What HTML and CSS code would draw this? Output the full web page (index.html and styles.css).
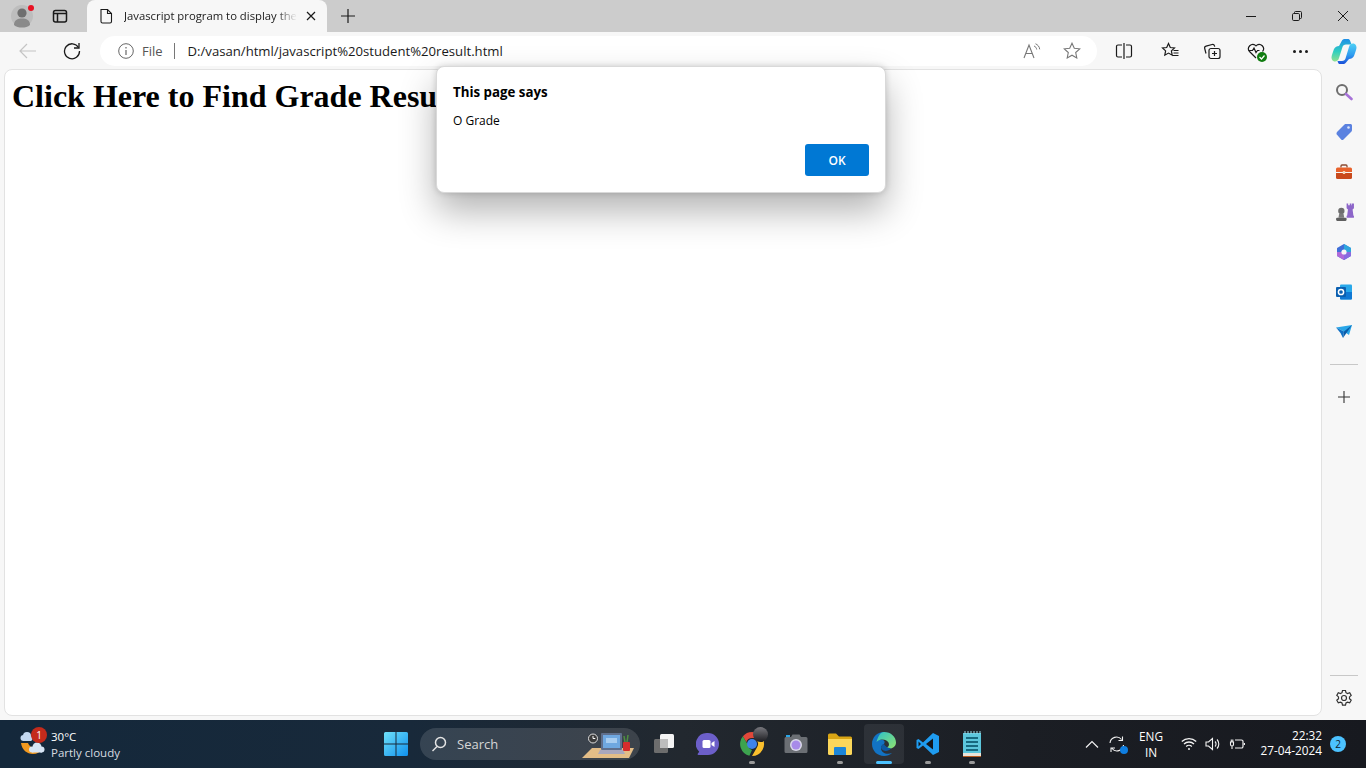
FILE: index.html
```html
<!DOCTYPE html>
<html lang="en">
<head>
    <meta charset="UTF-8">
    <meta name="viewport" content="width=device-width, initial-scale=1.0">
    <title>Javascript program to display the result</title>
    <link rel="stylesheet" href="styles.css">
</head>
<body>

<div class="tabstrip">
    <div class="profile">
        <svg width="24" height="24" viewBox="0 0 24 24"><circle cx="12" cy="12" r="11" fill="#bdbdbd"/><circle cx="12" cy="9" r="4.6" fill="#6f6f6f"/><path d="M4 21c0-5 3.500-6.500 8-6.500s8 1.500 8 6.500c-2 2-5 2.500-8 2.500s-6-.5-8-2.500z" fill="#8a8a8a"/></svg>
        <span class="profile-dot"></span>
    </div>
    <div class="strip-btn">
        <svg width="16" height="16" viewBox="0 0 16 16" fill="none" stroke="#1a1a1a" stroke-width="1.500"><rect x="1.500" y="2.500" width="13" height="11.500" rx="2"/><path d="M1.500 5.500h13M5.500 5.500V14"/></svg>
    </div>
    <div class="tab">
        <svg width="16" height="16" viewBox="0 0 16 16" fill="none" stroke="#1a1a1a" stroke-width="1.100"><path d="M3 1.500h6.500l4 4v8a1.500 1.500 0 0 1-1.500 1.500H4.500A1.500 1.500 0 0 1 3 13.500z"/><path d="M9.500 1.500v4h4"/></svg>
        <span class="tab-title">Javascript program to display the</span>
        <svg class="tab-close" width="10" height="10" viewBox="0 0 10 10" stroke="#1a1a1a" stroke-width="1.200"><path d="M1 1l8 8M9 1l-8 8"/></svg>
    </div>
    <div class="new-tab">
        <svg width="16" height="16" viewBox="0 0 16 16" stroke="#1a1a1a" stroke-width="1.200"><path d="M8 1v14M1 8h14"/></svg>
    </div>
    <div class="win-controls">
        <div class="win-btn"><svg width="10" height="10" viewBox="0 0 10 10" stroke="#1a1a1a"><path d="M0 5.500h10"/></svg></div>
        <div class="win-btn"><svg width="10" height="10" viewBox="0 0 10 10" fill="none" stroke="#1a1a1a"><rect x=".5" y="2.500" width="7" height="7" rx="1.200"/><path d="M2.500 2.500V1.500a1 1 0 0 1 1-1h5a1 1 0 0 1 1 1v5a1 1 0 0 1-1 1h-1"/></svg></div>
        <div class="win-btn"><svg width="10" height="10" viewBox="0 0 10 10" stroke="#1a1a1a"><path d="M0 0l10 10M10 0L0 10"/></svg></div>
    </div>
</div>

<div class="toolbar">
    <div class="nav-btn">
        <svg width="18" height="18" viewBox="0 0 18 18" fill="none" stroke="#c4c4c4" stroke-width="1.200"><path d="M17 9H1M8 2L1 9l7 7"/></svg>
    </div>
    <div class="nav-btn">
        <svg width="18" height="18" viewBox="0 0 18 18" fill="none" stroke="#1a1a1a" stroke-width="1.300"><path d="M15.500 5.500A7.500 7.500 0 1 0 16.500 9"/><path d="M16 1v5h-5"/></svg>
    </div>
    <div class="address">
        <svg width="16" height="16" viewBox="0 0 16 16" fill="none" stroke="#666"><circle cx="8" cy="8" r="7.300"/><path d="M8 7v5M8 4v1.500" stroke-width="1.200"/></svg>
        <span class="addr-file">File</span>
        <span class="addr-sep"></span>
        <span class="addr-url">D:/vasan/html/javascript%20student%20result.html</span>
        <span class="addr-icons">
            <svg width="18" height="16" viewBox="0 0 18 16" fill="none" stroke="#777" stroke-width="1.100"><path d="M1 15L6 2l5 13M2.800 10.500h6.400"/><path d="M11 3c1.500.5 2.500 1.800 2.700 3.500M12.500 .8c2 .8 4 2.700 4.200 5.500" stroke-width="1"/></svg>
            <svg width="18" height="18" viewBox="0 0 18 18" fill="none" stroke="#777" stroke-width="1.100"><path d="M9 1.200l2.300 5 5.400.6-4 3.700 1.100 5.400L9 13.200l-4.800 2.700 1.100-5.400-4-3.700 5.400-.6z"/></svg>
        </span>
    </div>
    <div class="tool-icons">
        <div class="tool-btn"><svg width="18" height="18" viewBox="0 0 18 18" fill="none" stroke="#1a1a1a" stroke-width="1.200"><path d="M7 3H3a1.500 1.500 0 0 0-1.500 1.500v9A1.500 1.500 0 0 0 3 15h4M11 3h4a1.500 1.500 0 0 1 1.500 1.500v9A1.500 1.500 0 0 1 15 15h-4M9 1v16"/></svg></div>
        <div class="tool-btn"><svg class="nudge" width="18" height="18" viewBox="0 0 18 18" fill="none" stroke="#1a1a1a" stroke-width="1.200"><path d="M7.500 1.500l1.800 4 4.200.5-3.100 2.900.8 4.300-3.700-2.100-3.700 2.100.8-4.300L1.500 6l4.200-.5zM12.500 8.500h5M12.500 11h5M11.500 13.500h6"/></svg></div>
        <div class="tool-btn"><svg width="18" height="18" viewBox="0 0 18 18" fill="none" stroke="#1a1a1a" stroke-width="1.200"><path d="M3 11.500l-1.300-5a2 2 0 0 1 1.400-2.400l6-1.600a2 2 0 0 1 2.400 1.400l.2.800"/><rect x="6" y="6.500" width="11" height="10" rx="2"/><path d="M11.500 9v5M9 11.500h5"/></svg></div>
        <div class="tool-btn health">
            <svg width="18" height="18" viewBox="0 0 18 18" fill="none" stroke="#1a1a1a" stroke-width="1.200"><path d="M9 16L2.500 9.500a4.300 4.300 0 0 1 6-6.100l.5.500.5-.5a4.300 4.300 0 0 1 6 6.100"/><path d="M1.500 8.500h4l1.500-2.500 2 4.500 1.500-2h2"/></svg>
            <span class="health-dot"><svg width="8" height="8" viewBox="0 0 8 8" fill="none" stroke="#fff" stroke-width="1.200"><path d="M1.500 4l2 2 3-3.500"/></svg></span>
        </div>
        <div class="tool-btn more"><span></span><span></span><span></span></div>
        <div class="tool-btn">
            <svg width="26" height="26" viewBox="0 0 26 26">
                <defs>
                    <linearGradient id="cpA" x1="0" y1="0" x2="0" y2="1"><stop offset="0" stop-color="#1f8fe8"/><stop offset=".55" stop-color="#2fcfc0"/><stop offset="1" stop-color="#8fe08f"/></linearGradient>
                    <linearGradient id="cpB" x1="0" y1="0" x2="0" y2="1"><stop offset="0" stop-color="#4fd0f5"/><stop offset=".55" stop-color="#2f9df0"/><stop offset="1" stop-color="#1a4fd8"/></linearGradient>
                </defs>
                <path d="M11 2.500C11.800 1.200 13 1 14 1h3c1 0 1.500.5 2 1.500l1.500 4H15c-2 0-3 1-3.500 2.500L8 20c-.5 2-2 3.500-4 3.500-2.500 0-3.500-2.500-3.500-4 0-1 .3-2 .7-3.200L3 11c1-2 3-3 5-3z" fill="url(#cpA)"/>
                <path d="M15 24.500c-.8 1.300-2 1.500-3 1.500H9c-1 0-1.500-.5-2-1.500L6.500 23H11c2 0 3-1 3.500-2.500L18 9c.5-2 2-3.500 4-3.500 2.500 0 3.500 2.500 3.500 4 0 1-.3 2-.7 3.200L23 18c-1 2-3 3-5 3z" fill="url(#cpB)"/>
            </svg>
        </div>
    </div>
</div>

<div class="middle">
    <main class="page">
        <h1>Click Here to Find Grade Result</h1>
    </main>
    <aside class="sidebar">
        <div class="side-btn"><svg width="18" height="18" viewBox="0 0 18 18" fill="none"><circle cx="7" cy="7" r="5" stroke="#6e6e6e" stroke-width="2"/><path d="M11 11l5.500 5" stroke="#a772d8" stroke-width="2.600" stroke-linecap="round"/></svg></div>
        <div class="side-btn"><svg width="18" height="18" viewBox="0 0 18 18"><path d="M1.500 9.500L9.500 1.500c.5-.4 1-.5 1.500-.5h4.500c.8 0 1.500.7 1.500 1.500V7c0 .5-.1 1-.5 1.500l-8 8c-.7.7-1.600.7-2.300 0l-4.200-4.700c-.7-.7-.7-1.600 0-2.300z" fill="#5b82e0"/><circle cx="13.500" cy="4.500" r="1.300" fill="#dbe6fb"/></svg></div>
        <div class="side-btn"><svg width="18" height="18" viewBox="0 0 18 18"><path d="M6 4.500V3a1 1 0 0 1 1-1h4a1 1 0 0 1 1 1v1.500" fill="none" stroke="#8a4a30" stroke-width="1.300"/><path d="M1 6a1.500 1.500 0 0 1 1.500-1.500h13A1.500 1.500 0 0 1 17 6v3H1z" fill="#e8622c"/><path d="M1 10h16v4.500a1.500 1.500 0 0 1-1.500 1.500h-13A1.500 1.500 0 0 1 1 14.500z" fill="#c94a1c"/><rect x="7.800" y="8" width="2.400" height="3" rx=".5" fill="#f5d8b8"/></svg></div>
        <div class="side-btn"><svg width="21" height="21" viewBox="0 0 20 20"><circle cx="7" cy="8.500" r="3" fill="#6e6e6e"/><path d="M5 11h4l.8 4H4.200z" fill="#7b7b7b"/><rect x="2" y="15" width="10" height="3" rx="1" fill="#5f5f5f"/><path d="M12 1.500h1.500v1.500h1.500V1.500h1.500V3h.5V1.500H19V6l-1.300 1.200.8 5.800H19v2h-7v-2h.5l.8-5.800L12 6z" fill="#8d66c9"/></svg></div>
        <div class="side-btn"><svg width="18" height="18" viewBox="0 0 18 18" stroke-linejoin="round"><path d="M9 2l6 3.500v7L9 16l-6-3.500v-7z" fill="#3f6fd8" stroke="#3f6fd8" stroke-width="2"/><path d="M9 1l7 4v4H9z" fill="#2fa6dd"/><path d="M2 9h7v8l-7-4z" fill="#b06ad8"/><path d="M9 9h7v4l-7 4z" fill="#8a6be0"/><circle cx="9" cy="9" r="2.600" fill="#f7f7f7"/></svg></div>
        <div class="side-btn"><svg width="18" height="18" viewBox="0 0 18 18"><rect x="5" y="1.500" width="12" height="15" rx="1" fill="#28a8ea"/><path d="M5 9h12v6.500a1 1 0 0 1-1 1H6a1 1 0 0 1-1-1z" fill="#0f78d4"/><rect x="1" y="4" width="10" height="10" rx="1" fill="#0a5fb0"/><circle cx="6" cy="9" r="2.600" fill="none" stroke="#fff" stroke-width="1.500"/></svg></div>
        <div class="side-btn"><svg width="18" height="18" viewBox="0 0 18 18"><path d="M1 4.500L17 2l-3 10-5-3.500z" fill="#29a6e8"/><path d="M1 4.500l8 4-1 6.500-2.500-5z" fill="#0f6fc4"/><path d="M9 8.500L17 2 8 15z" fill="#0a5ba8"/></svg></div>
        <div class="side-rule"></div>
        <div class="side-btn"><svg width="14" height="14" viewBox="0 0 14 14" stroke="#333" stroke-width="1.100"><path d="M7 1v12M1 7h12"/></svg></div>
        <div class="side-spacer"></div>
        <div class="side-rule"></div>
        <div class="side-btn"><svg width="18" height="18" viewBox="0 0 18 18" fill="none" stroke="#333" stroke-width="1.200"><circle cx="9" cy="9" r="2.500"/><path d="M7.500 1.500h3l.5 2.200 1.500.8 2.200-.7 1.500 2.600-1.700 1.500v1.800l1.700 1.500-1.500 2.600-2.200-.7-1.500.8-.5 2.200h-3l-.5-2.200-1.500-.8-2.200.7-1.500-2.600 1.700-1.500V7.900L1.800 6.400l1.500-2.600 2.200.7 1.500-.8z"/></svg></div>
    </aside>
</div>

<div class="taskbar">
    <div class="weather">
        <svg class="weather-icon" width="28" height="28" viewBox="0 0 28 28">
            <path d="M2 13c1 7 6 11 12 11 4 0 7-2 9-5-6 1-12-1-14-6z" fill="#f2991f"/>
            <g fill="#c3d8f0"><circle cx="4.500" cy="8" r="3"/><circle cx="8" cy="6" r="4"/><circle cx="11" cy="8.500" r="2.500"/><rect x="4" y="8" width="8" height="3"/></g>
            <g fill="#d7e5f5"><circle cx="13" cy="19.500" r="3"/><circle cx="18" cy="17" r="4.500"/><circle cx="22.500" cy="19.500" r="3"/><rect x="13" y="19" width="10" height="3.500"/></g>
        </svg>
        <span class="weather-badge">1</span>
        <div class="weather-text">
            <span class="temp">30°C</span>
            <span class="sky">Partly cloudy</span>
        </div>
    </div>
    <div class="start">
        <svg width="24" height="24" viewBox="0 0 24 24"><defs><linearGradient id="winG" x1="0" y1="0" x2="1" y2="1"><stop offset="0" stop-color="#6fe0f8"/><stop offset="1" stop-color="#0f90ee"/></linearGradient></defs><path d="M0 1.500A1.500 1.500 0 0 1 1.500 0h10v11.500H0zM12.500 0h10A1.500 1.500 0 0 1 24 1.500v10H12.500zM0 12.500h11.500V24h-10A1.500 1.500 0 0 1 0 22.500zM12.500 12.500H24v10a1.500 1.500 0 0 1-1.500 1.500h-10z" fill="url(#winG)"/></svg>
    </div>
    <div class="search">
        <svg width="16" height="16" viewBox="0 0 16 16" fill="none" stroke="#e4e4e4" stroke-width="1.500"><circle cx="9.500" cy="6.500" r="5"/><path d="M6 10.500L1.500 15"/></svg>
        <span class="search-label">Search</span>
        <svg class="search-art" width="54" height="32" viewBox="0 0 54 32">
            <path d="M11 20h42l-5 10H1z" fill="#e3bd87"/>
            <rect x="20" y="5" width="21" height="17" rx="1" fill="#5f6f8c"/>
            <rect x="22" y="7" width="17" height="13" fill="#6fa8e0"/>
            <rect x="25" y="10" width="11" height="5" fill="#a8cdf0"/>
            <path d="M19 22h23l2 4H17z" fill="#a9a7bd"/>
            <rect x="42" y="14" width="7" height="9" rx="1" fill="#d62c2c"/>
            <path d="M44 14l-1-6M46 14l1-7" stroke="#4e8f3f" stroke-width="1.500"/>
            <circle cx="12" cy="10.500" r="4.500" fill="#3b3b3b" stroke="#ddd"/>
            <path d="M12 8v2.500h2.300" fill="none" stroke="#fff"/>
        </svg>
    </div>
    <div class="task-icons">
        <div class="task-btn"><svg width="24" height="24" viewBox="0 0 24 24"><rect x="2" y="7" width="14" height="14" rx="1.500" fill="#6d6d6d"/><rect x="8" y="2" width="14" height="14" rx="1.500" fill="#f4f4f4"/><rect x="8" y="7" width="8" height="9" fill="#bdbdbd"/></svg></div>
        <div class="task-btn"><svg width="24" height="24" viewBox="0 0 24 24"><path d="M12 1a11 11 0 0 1 0 22H2.500c-1 0-1.200-.8-.6-1.500l1.300-1.700A11 11 0 0 1 12 1z" fill="#6c5fc9"/><rect x="6.500" y="8" width="8" height="8" rx="1.500" fill="#fff"/><path d="M15.500 11l3-2v6l-3-2z" fill="#fff"/></svg></div>
        <div class="task-btn">
            <svg width="26" height="26" viewBox="0 0 26 26"><path d="M13 1a12 12 0 0 1 10.400 6H13a6 6 0 0 0-5.700 4.200L3.900 5.300A12 12 0 0 1 13 1z" fill="#e0483a"/><path d="M23.400 7A12 12 0 0 1 13 25l5.200-9A6 6 0 0 0 17.500 9z" fill="#fbc02d"/><path d="M3.900 5.300l5.200 9A6 6 0 0 0 13 19l-2.600 5.700A12 12 0 0 1 3.900 5.300z" fill="#3da34f"/><circle cx="13" cy="13" r="5" fill="#3f83ea"/></svg>
            <span class="chrome-badge"></span>
            <span class="pin"></span>
        </div>
        <div class="task-btn"><svg width="24" height="22" viewBox="0 0 24 22"><path d="M2 4h5l1.500-2.500h7L17 4h5a1.500 1.500 0 0 1 1.500 1.500v13A1.500 1.500 0 0 1 22 20H2a1.500 1.500 0 0 1-1.500-1.500v-13A1.500 1.500 0 0 1 2 4z" fill="#6b6f74"/><rect x="2" y="2" width="4" height="2" fill="#29a6e8"/><circle cx="12" cy="12" r="6" fill="#d9d9e8"/><circle cx="12" cy="12" r="4.500" fill="#a78be8"/></svg></div>
        <div class="task-btn">
            <svg width="24" height="22" viewBox="0 0 24 22"><path d="M0 2a1.500 1.500 0 0 1 1.500-1.500H8L11 3.500h11.500A1.500 1.500 0 0 1 24 5v3H0z" fill="#d9a514"/><path d="M0 6h24v14.500a1.500 1.500 0 0 1-1.500 1.500h-21A1.500 1.500 0 0 1 0 20.500z" fill="#fbd75b"/><path d="M7 14h10a1 1 0 0 1 1 1v7H6v-7a1 1 0 0 1 1-1z" fill="#1c86d8"/></svg>
            <span class="pin"></span>
        </div>
        <div class="task-btn active">
            <svg width="26" height="26" viewBox="0 0 26 26"><defs><linearGradient id="edgeG" x1="0" y1="0" x2="1" y2="1"><stop offset="0" stop-color="#2ec0c8"/><stop offset="1" stop-color="#8fe36f"/></linearGradient></defs><path d="M13 1C6 1 1 6.500 1 13c0 7 5.500 12 12 12 3 0 6-1 8-3-5 2-11 0-11-5 0-2 1.500-3.500 3-4 2-3-1-5-4-4 1-4 4-5 7-5z" fill="#1273c4"/><path d="M13 1c7 0 12 5 12 10.500 0 3.500-3 6-6 6-2 0-3-.5-3-1 2-1 2.500-3 1.500-5C16 9 13 8 10 8.500 8 9 6.500 10 5.500 11 7 5 9.500 1 13 1z" fill="url(#edgeG)"/><path d="M10 17c0-2 1.500-3.500 3-4 1 2 3 4 7 4.500-2.500 3-8 3.500-10-.5z" fill="#0c59a4"/></svg>
            <span class="active-bar"></span>
        </div>
        <div class="task-btn">
            <svg width="24" height="24" viewBox="0 0 24 24"><path d="M17 1l6 3v16l-6 3L7 13.500 2.500 17 .5 16V8l2-1L7 10.500z" fill="#1f9cf0"/><path d="M17 6.500L10 12l7 5.500z" fill="#15161a"/><path d="M2.500 9.500v5L5 12z" fill="#15161a"/></svg>
            <span class="pin"></span>
        </div>
        <div class="task-btn">
            <svg width="20" height="26" viewBox="0 0 20 26"><rect x="1" y="2" width="18" height="22" fill="#5cc6dc"/><path d="M1 22h18v3H1z" fill="#e9e4da"/><path d="M1 25h18v1H1z" fill="#b85a20"/><path d="M4 7h12M4 11h12M4 15h12M4 19h12" stroke="#17697f" stroke-width="1.800"/><path d="M3 0v3M6 0v3M9 0v3M12 0v3M15 0v3M18 0v3" stroke="#9fdbe8"/></svg>
            <span class="pin"></span>
        </div>
    </div>
    <div class="tray">
        <svg class="tray-chev" width="14" height="8" viewBox="0 0 14 8" fill="none" stroke="#f2f2f2" stroke-width="1.200"><path d="M1 7.500l6-6 6 6"/></svg>
        <div class="tray-sync">
            <svg width="18" height="18" viewBox="0 0 18 18" fill="none" stroke="#f2f2f2" stroke-width="1.100"><path d="M2 8a6.500 6.500 0 0 1 11.500-3.500M14.500 1.500v4h-4"/><path d="M15.500 10a6.500 6.500 0 0 1-11.500 3.500M3 17v-4h4"/></svg>
            <span class="sync-dot"></span>
        </div>
        <div class="tray-lang"><span>ENG</span><span>IN</span></div>
        <div class="tray-sys">
            <svg width="16" height="14" viewBox="0 0 16 14" fill="none" stroke="#f2f2f2" stroke-width="1.300"><path d="M.8 4.500a10.500 10.500 0 0 1 14.400 0M3 7a7.300 7.300 0 0 1 10 0M5.200 9.500a4 4 0 0 1 5.600 0"/><circle cx="8" cy="12" r="1" fill="#f2f2f2" stroke="none"/></svg>
            <svg width="16" height="14" viewBox="0 0 16 14" fill="none" stroke="#f2f2f2" stroke-width="1.100"><path d="M1 5v4h2.500L7.500 12.500v-11L3.500 5z"/><path d="M10 4.500a3.500 3.500 0 0 1 0 5M12 2.500a6.500 6.500 0 0 1 0 9"/></svg>
            <svg width="16" height="14" viewBox="0 0 16 14" fill="none" stroke="#f2f2f2" stroke-width="1.200"><path d="M6 3h6.500A1.500 1.500 0 0 1 14 4.500v5a1.500 1.500 0 0 1-1.500 1.500H6M15.500 6v2"/><path d="M1.500 5h3v2.500a1.500 1.500 0 0 1-3 0zM2.300 5V2.500M3.800 5V2.500M3 9v3" stroke-width="1.100"/></svg>
        </div>
        <div class="tray-clock"><span>22:32</span><span>27-04-2024</span></div>
        <span class="tray-badge">2</span>
    </div>
</div>

<div class="dialog">
    <div class="dialog-title">This page says</div>
    <div class="dialog-msg">O Grade</div>
    <div class="dialog-actions">
        <button type="button" class="dialog-ok">OK</button>
    </div>
</div>

</body>
</html>
```

FILE: styles.css
```css
* {
    box-sizing: border-box;
}
html, body {
    height: 100%;
}
body {
    margin: 0;
    width: 1366px;
    height: 768px;
    overflow: hidden;
    display: flex;
    flex-direction: column;
    background: #f7f7f7;
    font-family: "Open Sans", "Noto Sans", sans-serif;
    color: #1a1a1a;
}
svg {
    display: block;
    flex: none;
}

/* title bar */
.tabstrip {
    height: 32px;
    flex: none;
    display: flex;
    align-items: flex-end;
    background: #cccccc;
}
.profile {
    position: relative;
    width: 24px;
    height: 24px;
    margin: 0 0 4px 10px;
}
.profile-dot {
    position: absolute;
    top: 1px;
    right: 0;
    width: 6px;
    height: 6px;
    border-radius: 50%;
    background: #e81123;
}
.strip-btn {
    width: 16px;
    height: 24px;
    margin: 0 0 4px 18px;
    display: flex;
    align-items: center;
}
.tab {
    width: 240px;
    height: 32px;
    margin-left: 19px;
    padding: 0 11px 0 11px;
    display: flex;
    align-items: center;
    background: #f7f7f7;
    border-radius: 8px 8px 0 0;
}
.tab-title {
    margin: -2px 0 0 10px;
    font-size: 11.300px;
    white-space: nowrap;
    -webkit-mask-image: linear-gradient(to right, #000 88%, transparent 100%);
    mask-image: linear-gradient(to right, #000 88%, transparent 100%);
}
.tab-close {
    margin-left: auto;
}
.new-tab {
    width: 16px;
    height: 32px;
    margin-left: 13px;
    display: flex;
    align-items: center;
}
.win-controls {
    margin-left: auto;
    height: 32px;
    display: flex;
}
.win-btn {
    width: 46px;
    height: 32px;
    display: flex;
    align-items: center;
    justify-content: center;
}

/* toolbar */
.toolbar {
    height: 37px;
    flex: none;
    display: flex;
    align-items: flex-start;
    padding: 4px 0 0 8px;
    background: #f7f7f7;
}
.nav-btn {
    width: 40px;
    height: 30px;
    margin-right: 4px;
    display: flex;
    align-items: center;
    justify-content: center;
}
.address {
    width: 998px;
    height: 30px;
    margin-left: 4px;
    padding: 0 16px 0 18px;
    display: flex;
    align-items: center;
    background: #fff;
    border-radius: 15px;
    font-size: 13px;
}
.addr-file {
    margin-left: 8px;
    color: #555;
}
.addr-sep {
    width: 1px;
    height: 16px;
    margin: 0 13px 0 11px;
    background: #777;
}
.addr-url {
    font-size: 13.150px;
    white-space: nowrap;
}
.addr-icons {
    margin-left: auto;
    display: flex;
    align-items: center;
    gap: 22px;
}
.tool-icons {
    display: flex;
    margin-left: 5px;
}
.tool-btn {
    position: relative;
    width: 44px;
    height: 30px;
    display: flex;
    align-items: center;
    justify-content: center;
}
.nudge {
    margin-left: 3px;
}
.health-dot {
    position: absolute;
    left: 23px;
    top: 16px;
    width: 10px;
    height: 10px;
    border-radius: 50%;
    background: #107c10;
    display: flex;
    align-items: center;
    justify-content: center;
}
.more {
    gap: 3px;
}
.more span {
    width: 3px;
    height: 3px;
    border-radius: 50%;
    background: #1a1a1a;
}

/* page + sidebar */
.middle {
    flex: 1;
    min-height: 0;
    display: flex;
}
.page {
    flex: 1;
    margin: 0 0 4px 4px;
    padding: 8px 7px;
    background: #fff;
    border: 1px solid #e2e2e2;
    border-radius: 8px;
    overflow: hidden;
}
.page h1 {
    margin: 0;
    font-family: "Liberation Serif", serif;
    font-size: 32px;
    font-weight: bold;
    color: #000;
}
.sidebar {
    width: 44px;
    flex: none;
    display: flex;
    flex-direction: column;
    padding: 3px 0 2px;
}
.side-btn {
    height: 40px;
    flex: none;
    display: flex;
    align-items: center;
    justify-content: center;
}
.side-rule {
    height: 1px;
    flex: none;
    margin: 12px 8px;
    background: #c8c8c8;
}
.side-spacer {
    flex: 1;
}
.side-spacer + .side-rule {
    margin: 0 8px 2px;
}

/* taskbar */
.taskbar {
    height: 48px;
    flex: none;
    display: flex;
    align-items: center;
    background: linear-gradient(to right, #14283b 0%, #18293a 30%, #22282f 50%, #1b1e24 75%, #17191f 100%);
    color: #fff;
}
.weather {
    position: relative;
    width: 384px;
    height: 48px;
    flex: none;
    padding-left: 19px;
    display: flex;
    align-items: center;
}
.weather-badge {
    position: absolute;
    left: 31px;
    top: 7px;
    width: 16px;
    height: 16px;
    border-radius: 50%;
    background: #c42b1c;
    font-size: 10px;
    line-height: 16px;
    text-align: center;
}
.weather-text {
    margin-left: 4px;
    padding-top: 2px;
    display: flex;
    flex-direction: column;
    font-size: 11.500px;
    line-height: 16px;
}
.sky {
    color: #d8dce0;
}
.start {
    width: 24px;
    flex: none;
}
.search {
    width: 220px;
    height: 32px;
    margin-left: 12px;
    padding: 0 5px 0 11px;
    flex: none;
    display: flex;
    align-items: center;
    background: rgba(255, 255, 255, .13);
    border-radius: 16px;
}
.search-label {
    margin-left: 10px;
    font-size: 13px;
    color: #d6d6d6;
}
.search-art {
    margin-left: auto;
}
.task-icons {
    margin-left: 2px;
    display: flex;
}
.task-btn {
    position: relative;
    width: 44px;
    height: 40px;
    display: flex;
    align-items: center;
    justify-content: center;
}
.task-btn.active {
    width: 40px;
    margin: 0 2px;
    background: rgba(255, 255, 255, .07);
    border-radius: 4px;
}
.pin {
    position: absolute;
    left: 19px;
    bottom: 0;
    width: 6px;
    height: 3px;
    border-radius: 2px;
    background: #9a9a9a;
}
.active-bar {
    position: absolute;
    left: 12px;
    bottom: 0;
    width: 16px;
    height: 3px;
    border-radius: 2px;
    background: #4cc2ff;
}
.chrome-badge {
    position: absolute;
    left: 23px;
    top: 3px;
    width: 15px;
    height: 15px;
    border-radius: 50%;
    background: linear-gradient(#77777d, #1c1c20);
}
.tray {
    flex: 1;
    display: flex;
    align-items: center;
    padding-left: 91px;
}
.tray-sync {
    position: relative;
    margin-left: 9px;
}
.sync-dot {
    position: absolute;
    right: -2px;
    bottom: -1px;
    width: 8px;
    height: 8px;
    border-radius: 50%;
    background: #0f7ee0;
}
.tray-lang {
    width: 30px;
    margin-left: 10px;
    display: flex;
    flex-direction: column;
    align-items: center;
    font-size: 11.800px;
    line-height: 16px;
}
.tray-sys {
    margin-left: 15px;
    display: flex;
    gap: 8px;
}
.tray-clock {
    width: 72px;
    margin: -2px 0 0 5px;
    display: flex;
    flex-direction: column;
    align-items: flex-end;
    font-size: 11.800px;
    line-height: 15px;
}
.tray-badge {
    width: 16px;
    height: 16px;
    margin-left: 8px;
    border-radius: 50%;
    background: #4cc2ff;
    color: #10202c;
    font-size: 10px;
    line-height: 16px;
    text-align: center;
}

/* alert box */
.dialog {
    position: absolute;
    left: 436px;
    top: 66px;
    width: 450px;
    height: 127px;
    padding: 16px;
    background: #fff;
    border: 1px solid #d9d9d9;
    border-radius: 8px;
    box-shadow: 0 18px 36px rgba(0, 0, 0, .3), 0 0 6px rgba(0, 0, 0, .16);
    color: #000;
}
.dialog-title {
    font-size: 13.300px;
    font-weight: 700;
    line-height: 18px;
}
.dialog-msg {
    margin-top: 11px;
    font-size: 12px;
    line-height: 18px;
}
.dialog-actions {
    display: flex;
    justify-content: flex-end;
    margin-top: 14px;
}
.dialog-ok {
    width: 64px;
    height: 32px;
    padding: 0;
    border: none;
    border-radius: 3px;
    background: #0078d4;
    color: #fff;
    font-family: inherit;
    font-size: 12px;
    font-weight: 600;
}
```
